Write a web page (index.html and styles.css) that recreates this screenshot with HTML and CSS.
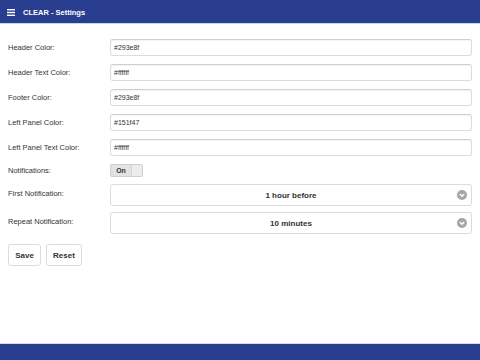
FILE: index.html
```html
<!DOCTYPE html>
<html>
<head>
<meta charset="utf-8">
<link rel="stylesheet" href="styles.css">
</head>
<body>
<div class="page">
  <header class="topbar">
    <svg class="menu" width="8" height="7" viewBox="0 0 8 7"><rect x="0" y="0" width="8" height="1.4" fill="#fff"/><rect x="0" y="2.8" width="8" height="1.4" fill="#fff"/><rect x="0" y="5.6" width="8" height="1.4" fill="#fff"/></svg>
    <span class="title">CLEAR - Settings</span>
  </header>
  <main class="content">
    <div class="row">
      <label class="lbl">Header Color:</label>
      <div class="input">#293e8f</div>
    </div>
    <div class="row">
      <label class="lbl">Header Text Color:</label>
      <div class="input">#ffffff</div>
    </div>
    <div class="row">
      <label class="lbl">Footer Color:</label>
      <div class="input">#293e8f</div>
    </div>
    <div class="row">
      <label class="lbl">Left Panel Color:</label>
      <div class="input">#151f47</div>
    </div>
    <div class="row">
      <label class="lbl">Left Panel Text Color:</label>
      <div class="input">#ffffff</div>
    </div>
    <div class="row row-toggle">
      <label class="lbl">Notifications:</label>
      <div class="toggle"><span class="on">On</span><span class="knob"></span></div>
    </div>
    <div class="row row-select">
      <label class="lbl">First Notification:</label>
      <div class="select"><span>1 hour before</span><span class="chev"><svg width="10" height="10" viewBox="0 0 10 10"><circle cx="5" cy="5" r="5" fill="#a6a6a6"/><path d="M2.8 4.1 L5 6.2 L7.2 4.1" stroke="#fff" stroke-width="1.4" fill="none"/></svg></span></div>
    </div>
    <div class="row row-select2">
      <label class="lbl">Repeat Notification:</label>
      <div class="select"><span>10 minutes</span><span class="chev"><svg width="10" height="10" viewBox="0 0 10 10"><circle cx="5" cy="5" r="5" fill="#a6a6a6"/><path d="M2.8 4.1 L5 6.2 L7.2 4.1" stroke="#fff" stroke-width="1.4" fill="none"/></svg></span></div>
    </div>
    <div class="buttons">
      <button class="btn btn-save">Save</button>
      <button class="btn btn-reset">Reset</button>
    </div>
  </main>
  <footer class="footbar"></footer>
</div>
</body>
</html>
```

FILE: styles.css
```css
html, body {
  margin: 0;
  padding: 0;
  background: #fff;
}
.page {
  width: 480px;
  height: 360px;
  display: flex;
  flex-direction: column;
  font-family: "Liberation Sans", Arial, sans-serif;
  color: #333;
}
.topbar {
  height: 24px;
  background: #293e8f;
  border-bottom: 1px solid #c9d3ee;
  display: flex;
  align-items: center;
  padding-left: 7px;
  padding-top: 2px;
  box-sizing: border-box;
}
.menu {
  display: block;
  margin-right: 8px;
}
.title {
  color: #fff;
  font-weight: bold;
  font-size: 7.5px;
}
.content {
  flex: 1;
  padding: 15px 8px 0 8px;
  display: flex;
  flex-direction: column;
}
.row {
  display: flex;
  align-items: center;
  margin-bottom: 8px;
}
.lbl {
  width: 102px;
  flex: none;
  font-size: 7.5px;
  color: #333;
}
.input {
  flex: 1;
  height: 17px;
  box-sizing: border-box;
  border: 1px solid #dcdcdc;
  border-top-color: #cfcfcf;
  border-radius: 3px;
  box-shadow: inset 0 1px 1px rgba(0,0,0,0.05);
  font-size: 7px;
  color: #333;
  padding-left: 3px;
  display: flex;
  align-items: center;
}
.row-toggle {
  margin-top: 0;
  margin-bottom: 7px;
}
.toggle {
  width: 33px;
  height: 13px;
  box-sizing: border-box;
  border: 1px solid #cfcfcf;
  border-radius: 2px;
  background: #e3e3e3;
  display: flex;
  align-items: stretch;
}
.on {
  width: 20px;
  font-size: 7px;
  font-weight: bold;
  color: #333;
  display: flex;
  align-items: center;
  justify-content: center;
}
.knob {
  flex: 1;
  background: #ececec;
  border-left: 1px solid #d6d6d6;
}
.select {
  flex: 1;
  height: 22px;
  box-sizing: border-box;
  border: 1px solid #dcdcdc;
  border-radius: 3px;
  display: flex;
  align-items: center;
  justify-content: center;
  position: relative;
  font-size: 8px;
  font-weight: bold;
  color: #333;
}
.row-select {
  align-items: flex-start;
  margin-bottom: 6px;
}
.row-select .lbl,
.row-select2 .lbl {
  padding-top: 5px;
}
.row-select2 {
  align-items: flex-start;
  margin-bottom: 10px;
}
.chev {
  position: absolute;
  right: 4px;
  top: 5px;
  width: 10px;
  height: 10px;
}
.chev svg {
  display: block;
}
.buttons {
  display: flex;
  gap: 5px;
}
.btn {
  height: 22px;
  box-sizing: border-box;
  border: 1px solid #dcdcdc;
  border-radius: 3px;
  background: #fff;
  font-family: "Liberation Sans", Arial, sans-serif;
  font-size: 8px;
  font-weight: bold;
  color: #333;
  padding: 0;
}
.btn-save { width: 33px; }
.btn-reset { width: 36px; }
.footbar {
  height: 16px;
  background: #293e8f;
  border-top: 1px solid #d5dcef;
}
```
